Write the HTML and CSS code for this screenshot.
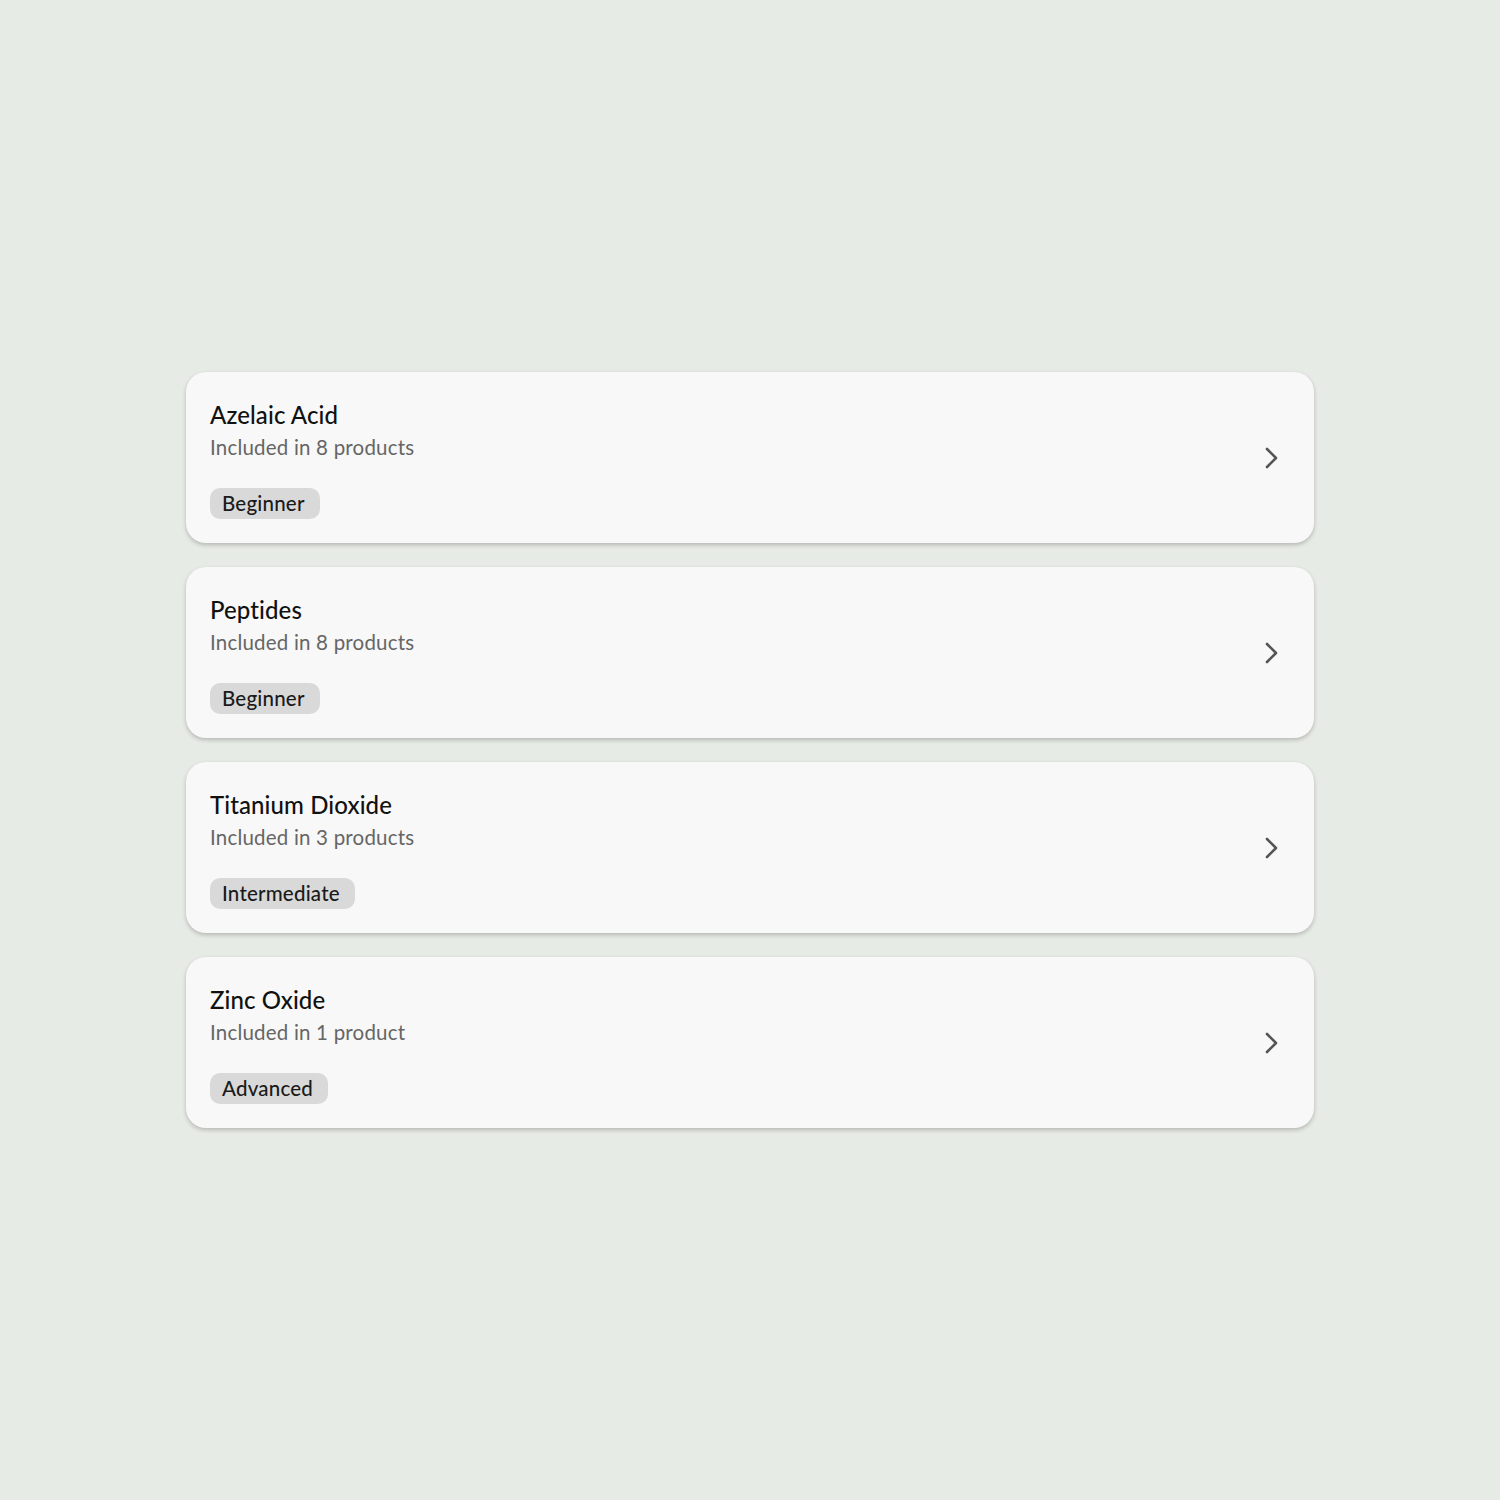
FILE: index.html
```html
<!DOCTYPE html>
<html lang="en">
<head>
<meta charset="utf-8">
<title>Ingredients</title>
<link rel="stylesheet" href="styles.css">
</head>
<body>
<main class="list">
  <a class="card" href="#">
    <div class="info">
      <div class="name">Azelaic Acid</div>
      <div class="count">Included in 8 products</div>
      <span class="badge">Beginner</span>
    </div>
    <svg class="chev" viewBox="0 0 14 22" width="14" height="22"><path d="M2 2l9 9-9 9" fill="none" stroke="#555" stroke-width="2.6" stroke-linecap="round" stroke-linejoin="round"/></svg>
  </a>
  <a class="card" href="#">
    <div class="info">
      <div class="name">Peptides</div>
      <div class="count">Included in 8 products</div>
      <span class="badge">Beginner</span>
    </div>
    <svg class="chev" viewBox="0 0 14 22" width="14" height="22"><path d="M2 2l9 9-9 9" fill="none" stroke="#555" stroke-width="2.6" stroke-linecap="round" stroke-linejoin="round"/></svg>
  </a>
  <a class="card" href="#">
    <div class="info">
      <div class="name">Titanium Dioxide</div>
      <div class="count">Included in 3 products</div>
      <span class="badge">Intermediate</span>
    </div>
    <svg class="chev" viewBox="0 0 14 22" width="14" height="22"><path d="M2 2l9 9-9 9" fill="none" stroke="#555" stroke-width="2.6" stroke-linecap="round" stroke-linejoin="round"/></svg>
  </a>
  <a class="card" href="#">
    <div class="info">
      <div class="name">Zinc Oxide</div>
      <div class="count">Included in 1 product</div>
      <span class="badge">Advanced</span>
    </div>
    <svg class="chev" viewBox="0 0 14 22" width="14" height="22"><path d="M2 2l9 9-9 9" fill="none" stroke="#555" stroke-width="2.6" stroke-linecap="round" stroke-linejoin="round"/></svg>
  </a>
</main>
</body>
</html>
```

FILE: styles.css
```css
html, body {
  margin: 0;
  padding: 0;
}
body {
  background: #e7ebe5;
  font-family: "Lato", "Open Sans", sans-serif;
  min-height: 1500px;
  display: flex;
  justify-content: center;
  align-items: center;
}
.list {
  width: 1128px;
  display: flex;
  flex-direction: column;
  gap: 24px;
}
.card {
  display: flex;
  align-items: center;
  justify-content: space-between;
  box-sizing: border-box;
  height: 171px;
  padding: 0 35px 0 24px;
  background: #f8f8f8;
  border-radius: 20px;
  box-shadow: 0 2px 4px rgba(0, 0, 0, 0.22);
  text-decoration: none;
  color: #111;
}
.info {
  display: flex;
  flex-direction: column;
  align-items: flex-start;
  padding-top: 4px;
}
.name {
  font-size: 24px;
  font-weight: 500;
  letter-spacing: 0.1px;
  line-height: 30px;
  color: #111;
}
.count {
  font-size: 20.5px;
  letter-spacing: 0.2px;
  line-height: 26px;
  color: #666;
  margin-top: 4px;
}
.badge {
  margin-top: 28px;
  background: #d9d9d9;
  border-radius: 10px;
  padding: 0 15px 0 12px;
  font-size: 20.5px;
  font-weight: 500;
  letter-spacing: 0.2px;
  line-height: 31px;
  color: #1a1a1a;
}
.chev {
  display: block;
}
```
